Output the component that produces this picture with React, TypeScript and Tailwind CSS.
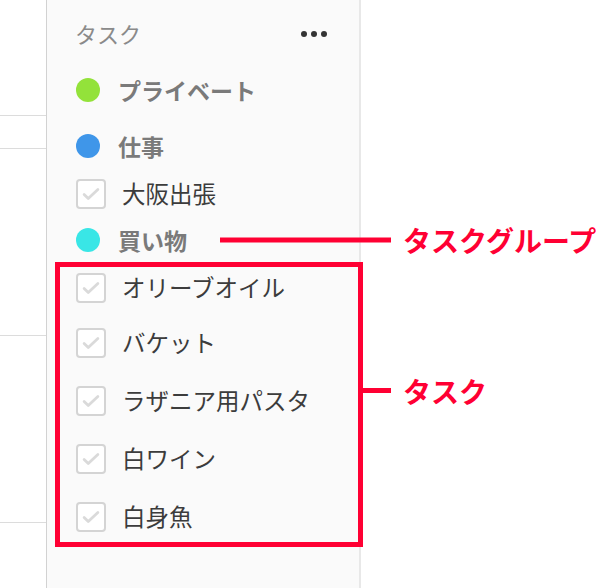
const FONT = "font-['Noto_Sans_CJK_JP','Noto_Sans',sans-serif]"

type Group = { name: string; color: string }

function Dot({ color }: { color: string }) {
  return <span className={`w-6 h-6 rounded-full shrink-0 ${color}`} />
}

function Check() {
  return (
    <span className="w-[30px] h-[30px] rounded-[4px] border-2 border-[#d4d4d4] bg-white flex items-center justify-center shrink-0">
      <svg width="22" height="22" viewBox="0 0 24 24" fill="none">
        <path d="M4.5 12.5l4.5 4.5L19.5 7" stroke="#dadada" strokeWidth="3" strokeLinecap="round" strokeLinejoin="round" />
      </svg>
    </span>
  )
}

function GroupRow({ group, className = "", children }: { group: Group; className?: string; children?: React.ReactNode }) {
  return (
    <div className={`relative flex items-center pl-[29px] gap-[18px] ${className}`}>
      <Dot color={group.color} />
      <span className="text-[23px] leading-none font-bold text-[#7a7a7a]">{group.name}</span>
      {children}
    </div>
  )
}

function TaskRow({ name, className = "h-[58px]" }: { name: string; className?: string }) {
  return (
    <div className={`flex items-center pl-[29px] gap-4 ${className}`}>
      <Check />
      <span className="text-[23.5px] leading-none text-[#3c3c3c]">{name}</span>
    </div>
  )
}

const shopping = ["オリーブオイル", "バケット", "ラザニア用パスタ", "白ワイン", "白身魚"]

export default function App() {
  return (
    <div className={`w-[608px] h-[588px] flex bg-white overflow-hidden ${FONT}`}>
      {/* left pane edge */}
      <div className="w-[47px] shrink-0 border-r border-[#d2d2d2] flex flex-col">
        <div className="h-[116px] border-b border-[#dcdcdc]" />
        <div className="h-[33px] border-b border-[#dcdcdc]" />
        <div className="h-[187px] border-b border-[#dcdcdc]" />
        <div className="h-[187px] border-b border-[#dcdcdc]" />
      </div>

      {/* sidebar */}
      <div className="w-[314px] shrink-0 bg-[#fafafa] border-r-2 border-[#e8e8e8] flex flex-col">
        <div className="h-[68px] flex items-center justify-between pl-[28px] pr-[32px]">
          <span className="text-[22px] leading-none text-[#8a8a8a] mb-[3px]">タスク</span>
          <div className="flex gap-[4px]">
            <span className="w-[6px] h-[6px] rounded-full bg-[#333]" />
            <span className="w-[6px] h-[6px] rounded-full bg-[#333]" />
            <span className="w-[6px] h-[6px] rounded-full bg-[#333]" />
          </div>
        </div>

        <GroupRow group={{ name: "プライベート", color: "bg-[#93e23a]" }} className="h-[44px]" />
        <GroupRow group={{ name: "仕事", color: "bg-[#3f96e9]" }} className="h-[44px] mt-[12px]" />
        <TaskRow name="大阪出張" className="h-[48px] mt-[2px]" />
        <GroupRow group={{ name: "買い物", color: "bg-[#39e6e6]" }} className="h-[44px]">
          {/* annotation: task group */}
          <span className="absolute left-[173px] top-1/2 -translate-y-1/2 w-[171px] h-[5px] bg-[#ff0033]" />
          <span className="absolute left-[356px] top-1/2 -translate-y-1/2 whitespace-nowrap text-[28px] leading-none font-bold text-[#ff0033]">
            タスクグループ
          </span>
        </GroupRow>

        <div className="relative pb-[1px]">
          <TaskRow name={shopping[0]} className="h-[52px]" />
          {shopping.slice(1).map((s) => (
            <TaskRow key={s} name={s} />
          ))}
          {/* annotation: tasks */}
          <div className="absolute left-[8px] -right-[4px] top-0 bottom-0 border-[5px] border-[#ff0033]">
            <span className="absolute left-[303px] top-[121px] w-[28px] h-[5px] bg-[#ff0033]" />
            <span className="absolute left-[343px] top-[124px] -translate-y-1/2 whitespace-nowrap text-[28px] leading-none font-bold text-[#ff0033]">
              タスク
            </span>
          </div>
        </div>
      </div>

      <div className="flex-1" />
    </div>
  )
}
